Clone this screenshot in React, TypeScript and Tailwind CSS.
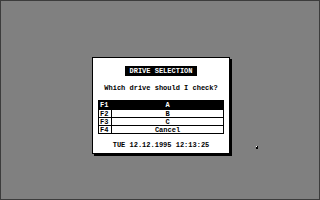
import React from "react";

const rows = [
  { key: "F1", label: "A", active: true },
  { key: "F2", label: "B", active: false },
  { key: "F3", label: "C", active: false },
  { key: "F4", label: "Cancel", active: false },
];

export default function App() {
  return (
    <div
      className="relative w-[320px] h-[200px] overflow-hidden bg-[#808080] border border-[#3c3c3c] text-black"
      style={{ fontFamily: '"Liberation Mono", "DejaVu Sans Mono", monospace' }}
    >
      {/* dialog */}
      <div className="absolute left-[91px] top-[56px] w-[138px] h-[97px] bg-white border border-black shadow-[2px_2px_0_#000] flex flex-col items-center pt-[8px] text-[7px] font-bold leading-[8px]">
        <div className="bg-black text-white px-[4px] h-[10px] leading-[10px] whitespace-nowrap text-center">
          DRIVE SELECTION
        </div>
        <div className="mt-[8px] whitespace-nowrap">Which drive should I check?</div>
        <div className="mt-[8px] w-[126px] border border-black flex flex-col">
          {rows.map((r, i) => (
            <div
              key={r.key}
              className={
                "flex h-[8px] " +
                (i > 0 ? "border-t border-black " : "") +
                (r.active ? "bg-black text-white" : "bg-white text-black")
              }
            >
              <div className="w-[13px] pl-[1px] leading-[8px] border-r border-black">
                {r.key}
              </div>
              <div className="flex-1 text-center leading-[8px]">{r.label}</div>
            </div>
          ))}
        </div>
        <div className="mt-[7px] whitespace-nowrap">TUE 12.12.1995 12:13:25</div>
      </div>
      {/* mouse speck */}
      <div className="absolute left-[255px] top-[145px] w-[2px] h-[3px] bg-black">
        <div className="w-[1px] h-[1px] bg-white" />
      </div>
    </div>
  );
}
